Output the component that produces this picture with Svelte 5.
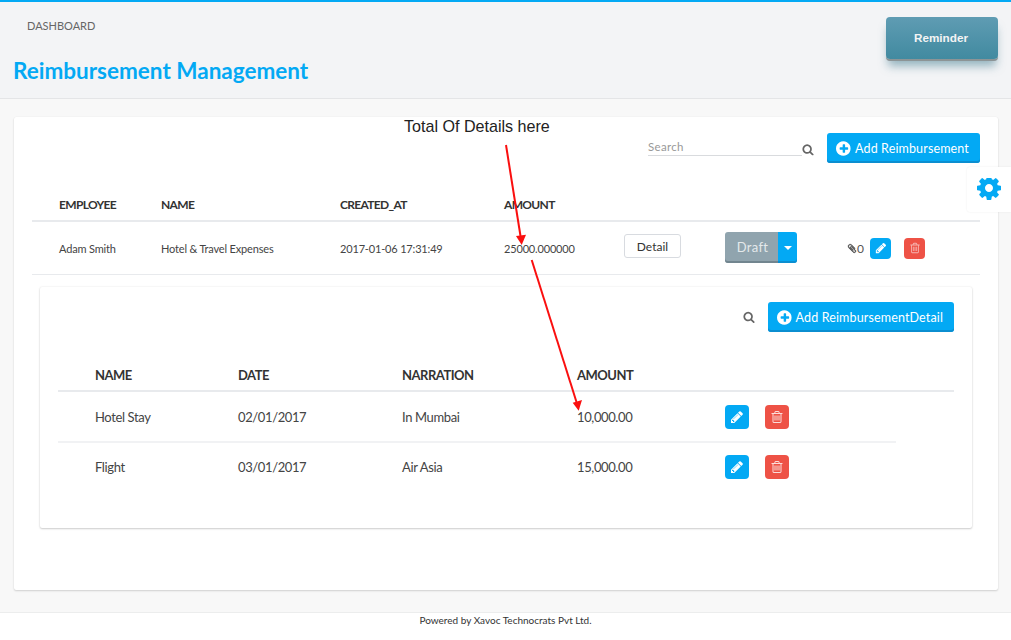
<script>
  const gear = "M1024 640q0-106-75-181t-181-75-181 75-75 181 75 181 181 75 181-75 75-181zm512-109v222q0 12-8 23t-20 13l-185 28q-19 54-39 91 35 50 107 138 10 12 10 25t-9 23q-27 37-99 108t-94 71q-12 0-26-9l-138-108q-44 23-91 38-16 136-29 186-7 28-36 28h-222q-14 0-24.5-8.5t-11.5-21.5l-28-184q-49-16-90-37l-141 107q-10 9-25 9-14 0-25-11-126-114-165-168-7-10-7-23 0-12 8-23 15-21 51-66.5t54-70.5q-27-50-41-99l-183-27q-13-2-21-12.5t-8-23.5v-222q0-12 8-23t19-13l186-28q14-46 39-92-40-57-107-138-10-12-10-24 0-10 9-23 26-36 98.5-107.5t94.5-71.5q13 0 26 10l138 107q44-23 91-38 16-136 29-186 7-28 36-28h222q14 0 24.5 8.5t11.5 21.5l28 184q49 16 90 37l142-107q9-9 24-9 13 0 25 10 129 119 165 170 7 8 7 22 0 12-8 23-15 21-51 66.5t-54 70.5q26 50 41 98l183 28q13 2 21 12.5t8 23.5z";
  const search = "M1216 832q0-185-131.5-316.5t-316.5-131.5-316.5 131.5-131.5 316.5 131.5 316.5 316.5 131.5 316.5-131.5 131.5-316.5zm512 832q0 52-38 90t-90 38q-54 0-90-38l-343-342q-179 124-399 124-143 0-273.5-55.5t-225-150-150-225-55.5-273.5 55.5-273.5 150-225 225-150 273.5-55.5 273.5 55.5 225 150 150 225 55.5 273.5q0 220-124 399l343 343q37 37 37 90z";
  const plus = "M1280 960v-128q0-26-19-45t-45-19h-256v-256q0-26-19-45t-45-19h-128q-26 0-45 19t-19 45v256h-256q-26 0-45 19t-19 45v128q0 26 19 45t45 19h256v256q0 26 19 45t45 19h128q26 0 45-19t19-45v-256h256q26 0 45-19t19-45zm256-64q0 209-103 385.5t-279.5 279.5-385.5 103-385.5-103-279.5-279.5-103-385.5 103-385.5 279.5-279.5 385.5-103 385.5 103 279.5 279.5 103 385.5z";
  const pencil = "M491 1536l91-91-235-235-91 91v107h128v128h107zm523-928q0-22-22-22-10 0-17 7l-542 542q-7 7-7 17 0 22 22 22 10 0 17-7l542-542q7-7 7-17zm-54-192l416 416-832 832h-416v-416zm683 96q0 53-37 90l-166 166-416-416 166-165q36-38 90-38 53 0 91 38l235 234q37 39 37 91z";
  const trash = "M704 736v576q0 14-9 23t-23 9h-64q-14 0-23-9t-9-23v-576q0-14 9-23t23-9h64q14 0 23 9t9 23zm256 0v576q0 14-9 23t-23 9h-64q-14 0-23-9t-9-23v-576q0-14 9-23t23-9h64q14 0 23 9t9 23zm256 0v576q0 14-9 23t-23 9h-64q-14 0-23-9t-9-23v-576q0-14 9-23t23-9h64q14 0 23 9t9 23zm128 724v-948h-896v948q0 22 7 40.5t14.5 27 10.5 8.5h832q3 0 10.5-8.5t14.5-27 7-40.5zm-672-1076h448l-48-117q-7-9-17-11h-317q-10 2-17 11zm928 32v64q0 14-9 23t-23 9h-96v948q0 83-47 143.5t-113 60.5h-832q-66 0-113-58.5t-47-141.5v-952h-96q-14 0-23-9t-9-23v-64q0-14 9-23t23-9h309l70-167q15-37 54-63t79-26h320q40 0 79 26t54 63l70 167h309q14 0 23 9t9 23z";
  const clip = "M1596 1385q0 117-79 196t-196 79q-135 0-235-100l-777-776q-113-115-113-271 0-159 110-270t269-111q158 0 273 113l605 606q10 10 10 22 0 16-30.5 46.5t-46.5 30.5q-13 0-23-10l-606-607q-79-77-181-77-106 0-179 75t-73 181q0 105 76 181l776 777q63 63 145 63 64 0 106-42t42-106q0-82-63-145l-581-581q-26-24-60-24-29 0-48 19t-19 48q0 32 25 59l410 410q10 10 10 22 0 16-31 47t-47 31q-12 0-22-10l-410-410q-63-61-63-149 0-82 57-139t139-57q88 0 149 63l581 581q100 98 100 235z";
  const details = [
    { name: "Hotel Stay", date: "02/01/2017", narration: "In Mumbai", amount: "10,000.00" },
    { name: "Flight", date: "03/01/2017", narration: "Air Asia", amount: "15,000.00" }
  ];
</script>

{#snippet icon(d, cls, box = 1792)}
  <svg class={cls} viewBox="0 0 {box} {box}" aria-hidden="true"><path d={d} fill="currentColor" /></svg>
{/snippet}

<div class="page">
  <header class="top">
    <div class="top-text">
      <div class="crumb">DASHBOARD</div>
      <h1>Reimbursement Management</h1>
    </div>
    <button class="reminder">Reminder</button>
  </header>

  <main class="content">
    <section class="card">
      <div class="toolbar">
        <div class="search">
          <span class="search-field">Search</span>
          {@render icon(search, "i-search")}
        </div>
        <button class="add">{@render icon(plus, "i-plus")}Add Reimbursement</button>
      </div>

      <div class="row main head">
        <span>EMPLOYEE</span><span>NAME</span><span>CREATED_AT</span><span>AMOUNT</span>
      </div>
      <div class="row main body">
        <span>Adam Smith</span>
        <span>Hotel &amp; Travel Expenses</span>
        <span>2017-01-06 17:31:49</span>
        <span>25000.000000</span>
        <span class="detail-cell"><button class="detail">Detail</button></span>
        <span class="split">
          <button class="draft">Draft</button><button class="caret" aria-label="Open"><i></i></button>
        </span>
        <span class="actions">
          <span class="attach">{@render icon(clip, "i-clip")}0</span>
          <button class="sq edit small" aria-label="Edit">{@render icon(pencil, "i-small")}</button>
          <button class="sq del small" aria-label="Delete">{@render icon(trash, "i-small")}</button>
        </span>
      </div>

      <section class="subcard">
        <div class="subtoolbar">
          {@render icon(search, "i-search")}
          <button class="add">{@render icon(plus, "i-plus")}Add ReimbursementDetail</button>
        </div>
        <div class="row sub head">
          <span>NAME</span><span>DATE</span><span>NARRATION</span><span>AMOUNT</span>
        </div>
        {#each details as d, i}
          <div class="row sub body" class:divided={i === 0}>
            <span>{d.name}</span><span>{d.date}</span><span>{d.narration}</span><span>{d.amount}</span>
            <span class="subactions">
              <button class="sq edit" aria-label="Edit">{@render icon(pencil, "i-med")}</button>
              <button class="sq del" aria-label="Delete">{@render icon(trash, "i-med")}</button>
            </span>
          </div>
        {/each}
      </section>
    </section>
    <div class="gear-tab">{@render icon(gear, "i-gear", 1536)}</div>
  </main>

  <footer>Powered by Xavoc Technocrats Pvt Ltd.</footer>

  <div class="note">Total Of Details here</div>
  <svg class="arrows" viewBox="0 0 1011 640" aria-hidden="true">
    <path d="M506 145L520.5 236" stroke="#fa0f0f" stroke-width="2" fill="none" />
    <path d="M521.7 245L516 236L526 234.7Z" fill="#fa0f0f" />
    <path d="M531.7 260L576.5 402" stroke="#fa0f0f" stroke-width="2" fill="none" />
    <path d="M578.7 410.7L572.7 402.7L582 400Z" fill="#fa0f0f" />
  </svg>
</div>

<style>
  :global(body) { margin: 0; background: #fff; }
  * { box-sizing: border-box; }
  button { font-family: inherit; border: 0; padding: 0; margin: 0; }
  .page {
    position: relative; width: 1011px; height: 640px; overflow: hidden;
    font-family: Lato, "Open Sans", sans-serif; color: #333; background: #fff;
    display: flex; flex-direction: column;
  }
  .top {
    height: 99px; flex: none; background: #f3f4f6;
    border-top: 2px solid #03a9f4; border-bottom: 1px solid #e4e5e7;
    display: flex; justify-content: space-between; align-items: flex-start;
    padding: 15px 13px 0 13px;
  }
  .crumb { font-size: 11px; line-height: 18px; color: #666; margin-left: 14px; }
  h1 { margin: 22px 0 0; font-size: 22.5px; line-height: 28px; font-weight: 700; color: #03a9f4; }
  .reminder {
    width: 112px; height: 42px; border-radius: 4px; padding: 0 2px 1px 0;
    background: linear-gradient(#5f9cb3, #418aa0);
    color: #f4f4f4; font: 700 11.7px "Liberation Sans", sans-serif;
    box-shadow: 0 2px 0 #8c9496, 0 9px 10px -2px rgba(70, 125, 145, 0.55);
  }
  .content { position: relative; flex: 1; background: #f8f8f8; padding: 18px 13px 22px 14px; }
  .card {
    height: 473px; background: #fff; border-radius: 2px; padding: 16px 18px 0;
    box-shadow: 0 1px 2px rgba(0,0,0,0.16), 0 0 1px rgba(0,0,0,0.08);
  }
  .toolbar { display: flex; justify-content: flex-end; align-items: center; height: 30px; gap: 13px; }
  .search { display: flex; align-items: flex-end; height: 30px; padding-bottom: 7px; }
  .search-field {
    width: 154px; font-size: 11.5px; line-height: 15px; color: #999; border-bottom: 1px solid #d9dbde;
    letter-spacing: 0.3px; padding-bottom: 1px;
  }
  :global(.i-search) { width: 12px; height: 12px; color: #666; display: block; }
  .search :global(.i-search) { transform: translateY(-0.5px); }
  .add {
    height: 30px; padding: 0 11px 0 9px; border-radius: 3px; background: #03a9f4; color: #fff;
    font-size: 12.5px; display: flex; align-items: center; white-space: nowrap;
    box-shadow: inset 0 -2px 0 #0b8ed0; letter-spacing: 0.14px;
  }
  :global(.i-plus) { width: 17px; height: 17px; margin-right: 2px; display: block; }
  .row { display: grid; align-items: center; }
  .main { grid-template-columns: 102px 179px 164px 120px 101px 122px auto; padding-left: 27px; }
  .main.head {
    margin-top: 27px; height: 32px; padding-bottom: 2px; border-bottom: 2px solid #e8eaed;
    font-size: 12px; letter-spacing: -0.68px; font-weight: 700; color: #333;
  }
  .head span { white-space: nowrap; }
  .main.body { height: 53px; font-size: 11px; letter-spacing: -0.17px; color: #444; border-bottom: 1px solid #e8eaed; }
  .main.body > span { white-space: nowrap; }
  .detail-cell { margin-bottom: 4px; }
  .detail {
    display: block; width: 57px; height: 24px; background: #fff; border: 1px solid #d8dbe0; border-radius: 3px;
    font-size: 12px; letter-spacing: 0; color: #333;
  }
  .split { display: flex; width: 72px; height: 31px; margin-bottom: 1px; }
  .draft {
    width: 53px; background: #90a4ae; color: #e4e9eb; font-size: 13px; letter-spacing: 0.3px; padding: 0 0 1px 2px;
    border-radius: 3px 0 0 3px; box-shadow: inset 0 -2px 0 #72858f;
  }
  .caret {
    width: 19px; background: #03a9f4; border-radius: 0 3px 3px 0; box-shadow: inset 0 -2px 0 #0b8ed0;
    display: flex; align-items: center; justify-content: center;
  }
  .caret i { width: 0; height: 0; border: 4px solid transparent; border-top-color: #fff; border-bottom: 0; }
  .actions { display: flex; align-items: center; }
  .attach { display: flex; align-items: center; font-size: 12px; letter-spacing: 0; color: #555; width: 23px; }
  :global(.i-clip) { width: 10px; height: 11px; color: #444; display: block; stroke: #444; stroke-width: 70px; }
  .sq { display: flex; align-items: center; justify-content: center; width: 24px; height: 24px; border-radius: 4px; color: #fff; }
  .sq.small { width: 21px; height: 21px; }
  .edit { background: #03a9f4; }
  .del { background: #ee5246; color: #fbdcd9; }
  .small.del { margin-left: 13px; color: #f6b5b2; }
  :global(.i-small) { width: 12px; height: 12px; display: block; }
  :global(.i-med) { width: 14px; height: 14px; display: block; }
  .subcard {
    margin: 12px 8px 0; height: 241px; background: #fff; border-radius: 2px; padding: 15px 18px 0;
    box-shadow: 0 1px 2px rgba(0,0,0,0.18), 0 0 2px rgba(0,0,0,0.1);
  }
  .subtoolbar { display: flex; justify-content: flex-end; align-items: center; gap: 13px; height: 30px; }
  .sub { grid-template-columns: 143px 164px 175px 148px auto; padding-left: 37px; }
  .sub.head { margin-top: 28px; height: 32px; border-bottom: 2px solid #e8eaed; font-size: 13px; letter-spacing: -0.5px; font-weight: 700; }
  .sub.body { height: 48px; font-size: 13px; letter-spacing: -0.38px; color: #444; width: 838px; }
  .sub.body.divided { height: 51px; border-bottom: 2px solid #f1f2f4; }
  .subactions { display: flex; gap: 16px; }
  .gear-tab {
    position: absolute; right: 0; top: 68px; width: 44px; height: 45px; background: #fff;
    border-radius: 3px 0 0 3px; display: flex; align-items: center; justify-content: center;
    box-shadow: 0 0 2px rgba(0,0,0,0.08);
  }
  :global(.i-gear) { width: 24px; height: 24px; color: #03a9f4; display: block; }
  footer { height: 28px; flex: none; border-top: 1px solid #eceded; text-align: center; font-size: 10px; line-height: 15px; color: #333; }
  .note {
    position: absolute; left: 404px; top: 117px;
    font: 16.1px/18px "Liberation Sans", sans-serif; color: #222;
  }
  .arrows { position: absolute; inset: 0; width: 1011px; height: 640px; pointer-events: none; }
</style>
